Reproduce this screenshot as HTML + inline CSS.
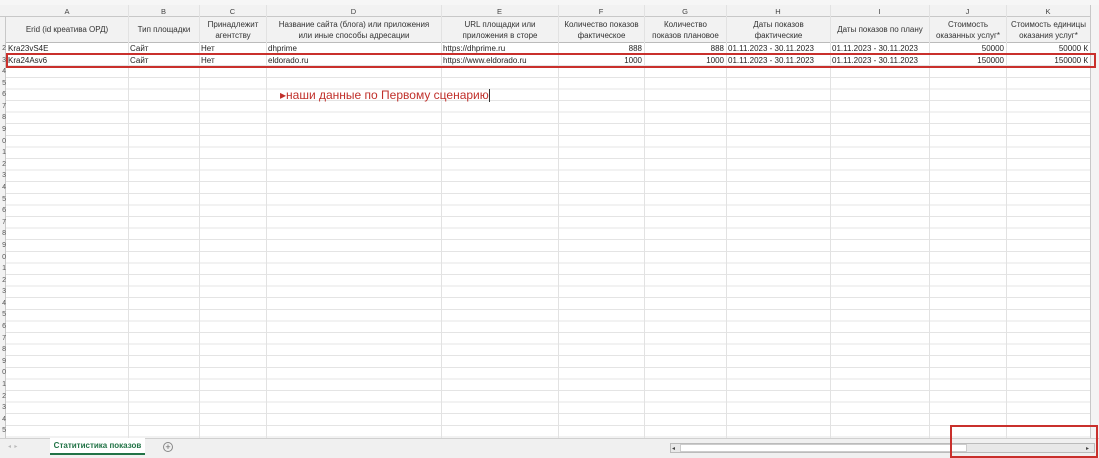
<!DOCTYPE html>
<html><head><meta charset="utf-8"><style>
*{margin:0;padding:0;box-sizing:border-box}
body{width:1099px;height:458px;overflow:hidden;background:#fff;font-family:"Liberation Sans","Noto Sans CJK SC",sans-serif;font-size:8px;color:#222;position:relative}
.abs{position:absolute}
.colhdr{top:5px;height:12px;background:#f2f2f2;border-bottom:1px solid #c8c8c8;left:0;width:1090px}
.v{position:absolute;top:5px;bottom:20px;width:1px;background:#e2e2e2}
.ch{position:absolute;top:6px;height:11px;text-align:center;font-size:7.5px;color:#444;line-height:11px}
.h{position:absolute;top:17px;height:26px;background:#f2f2f2;border-bottom:1px solid #bbb;text-align:center;display:flex;align-items:center;justify-content:center;font-size:8px;line-height:11px;color:#333}
.c{position:absolute;height:11px;line-height:11px;font-size:8px;white-space:nowrap;padding:0 2px}
.r{text-align:right}
.rn{position:absolute;left:0;top:66px;width:6px;overflow:hidden;font-size:7px;line-height:11.6px;color:#555;text-align:right;direction:rtl}
</style></head><body>
<div class="abs" style="left:0;top:0;width:1099px;height:5px;background:#f6f6f6"></div>
<div class="abs colhdr"></div>
<div class="abs" style="left:0;top:17px;width:6px;height:421px;background:#f2f2f2;border-right:1px solid #c8c8c8"></div>
<div class="abs" style="left:6px;top:43px;width:1084px;height:395px;background:repeating-linear-gradient(to bottom,transparent 0,transparent 10.6px,#e4e4e4 10.6px,#e4e4e4 11.6px)"></div>
<div class="rn">4<br>5<br>6<br>7<br>8<br>9<br>0<br>1<br>2<br>3<br>4<br>5<br>6<br>7<br>8<br>9<br>0<br>1<br>2<br>3<br>4<br>5<br>6<br>7<br>8<br>9<br>0<br>1<br>2<br>3<br>4<br>5</div>
<div class="abs" style="left:0;top:43px;width:6px;font-size:7px;line-height:11.5px;color:#555;overflow:hidden;text-align:right">2<br>3</div>
<div class="v" style="left:128px"></div><div class="v" style="left:199px"></div><div class="v" style="left:266px"></div><div class="v" style="left:441px"></div><div class="v" style="left:558px"></div><div class="v" style="left:644px"></div><div class="v" style="left:726px"></div><div class="v" style="left:830px"></div><div class="v" style="left:929px"></div><div class="v" style="left:1006px"></div><div class="v" style="left:1090px;background:#c8c8c8"></div>
<div class="abs" style="left:1091px;top:5px;width:8px;height:433px;background:#f4f4f4"></div>
<div class="ch" style="left:6px;width:122px">A</div><div class="ch" style="left:128px;width:71px">B</div><div class="ch" style="left:199px;width:67px">C</div><div class="ch" style="left:266px;width:175px">D</div><div class="ch" style="left:441px;width:117px">E</div><div class="ch" style="left:558px;width:86px">F</div><div class="ch" style="left:644px;width:82px">G</div><div class="ch" style="left:726px;width:104px">H</div><div class="ch" style="left:830px;width:99px">I</div><div class="ch" style="left:929px;width:77px">J</div><div class="ch" style="left:1006px;width:84px">K</div>
<div class="h" style="left:6px;width:122px">Erid (id креатива ОРД)</div>
<div class="h" style="left:129px;width:70px">Тип площадки</div>
<div class="h" style="left:200px;width:66px">Принадлежит<br>агентству</div>
<div class="h" style="left:267px;width:174px">Название сайта (блога) или приложения<br>или иные способы адресации</div>
<div class="h" style="left:442px;width:116px">URL площадки или<br>приложения в сторе</div>
<div class="h" style="left:559px;width:85px">Количество показов<br>фактическое</div>
<div class="h" style="left:645px;width:81px">Количество<br>показов плановое</div>
<div class="h" style="left:727px;width:103px">Даты показов<br>фактические</div>
<div class="h" style="left:831px;width:98px">Даты показов по плану</div>
<div class="h" style="left:930px;width:76px">Стоимость<br>оказанных услуг*</div>
<div class="h" style="left:1007px;width:83px">Стоимость единицы<br>оказания услуг*</div>
<div class="c" style="left:6px;top:43px">Kra23vS4E</div><div class="c" style="left:128px;top:43px">Сайт</div><div class="c" style="left:199px;top:43px">Нет</div><div class="c" style="left:266px;top:43px">dhprime</div><div class="c" style="left:441px;top:43px">https://dhprime.ru</div>
<div class="c r" style="left:558px;width:86px;top:43px">888</div><div class="c r" style="left:644px;width:82px;top:43px">888</div><div class="c" style="left:726px;top:43px">01.11.2023 - 30.11.2023</div><div class="c" style="left:830px;top:43px">01.11.2023 - 30.11.2023</div><div class="c r" style="left:929px;width:77px;top:43px">50000</div><div class="c r" style="left:1006px;width:84px;top:43px">50000 К</div>
<div class="c" style="left:6px;top:55px">Kra24Asv6</div><div class="c" style="left:128px;top:55px">Сайт</div><div class="c" style="left:199px;top:55px">Нет</div><div class="c" style="left:266px;top:55px">eldorado.ru</div><div class="c" style="left:441px;top:55px">https://www.eldorado.ru</div>
<div class="c r" style="left:558px;width:86px;top:55px">1000</div><div class="c r" style="left:644px;width:82px;top:55px">1000</div><div class="c" style="left:726px;top:55px">01.11.2023 - 30.11.2023</div><div class="c" style="left:830px;top:55px">01.11.2023 - 30.11.2023</div><div class="c r" style="left:929px;width:77px;top:55px">150000</div><div class="c r" style="left:1006px;width:84px;top:55px">150000 К</div>
<div class="abs" style="left:6px;top:53px;width:1090px;height:15px;border:2px solid #c9302c"></div>
<div class="abs" style="left:280px;top:88px;font-size:12px;color:#c0302b;white-space:nowrap">▸наши данные по Первому сценарию<span style="display:inline-block;width:1px;height:13px;background:#333;vertical-align:middle"></span></div>
<div class="abs" style="left:0;top:438px;width:1099px;height:20px;background:#f0f0f0;border-top:1px solid #d0d0d0"></div>
<div class="abs" style="left:8px;top:443px;font-size:6px;color:#bbb">◂ &nbsp;▸</div>
<div class="abs" style="left:50px;top:438px;width:95px;height:17px;background:#fff;border-bottom:2px solid #217346;color:#217346;font-weight:bold;font-size:8px;text-align:center;line-height:16px">Статитистика показов</div>
<div class="abs" style="left:163px;top:442px;width:10px;height:10px;border:1px solid #888;border-radius:50%;font-size:9px;line-height:8px;text-align:center;color:#666">+</div>
<div class="abs" style="left:670px;top:443px;width:425px;height:10px;background:#e8e8e8;border:1px solid #bbb"></div>
<div class="abs" style="left:680px;top:444px;width:287px;height:8px;background:#fff;border:1px solid #ccc"></div>
<div class="abs" style="left:672px;top:445px;font-size:6px;color:#444">◂</div>
<div class="abs" style="left:1086px;top:445px;font-size:6px;color:#444">▸</div>
<div class="abs" style="left:950px;top:425px;width:148px;height:33px;border:2px solid #c9302c"></div>
</body></html>
